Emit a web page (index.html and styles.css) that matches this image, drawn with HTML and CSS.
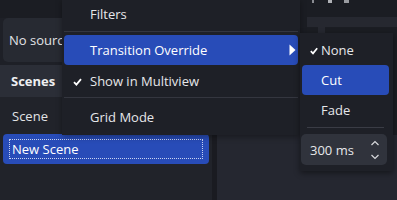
FILE: index.html
```html
<!DOCTYPE html>
<html>
<head>
<meta charset="utf-8">
<link rel="stylesheet" href="styles.css">
</head>
<body>
<div class="app">
  <div class="left">
    <div class="top-gap"></div>
    <div class="nosource">No source</div>
    <div class="dock-title">Scenes</div>
    <div class="scene-list">
      <div class="scene-row">Scene</div>
      <div class="scene-row selected"><span class="focus">New Scene</span></div>
    </div>
  </div>
  <div class="divider"></div>
  <div class="right">
    <div class="right-top">
      <div class="icons"><span class="ic a"></span><span class="ic b"></span><span class="ic c"></span></div>
      <div class="strip"></div>
      <div class="notch"></div>
    </div>
    <div class="panel"></div>
  </div>

  <div class="menu">
    <div class="item first">Filters</div>
    <div class="sep s1"></div>
    <div class="item active">Transition Override
      <svg class="arrow" width="7" height="12" viewBox="0 0 7 12"><path d="M0.5 0.5 L6.5 6 L0.5 11.5 Z" fill="#ffffff"/></svg>
    </div>
    <div class="item checked">
      <svg class="check" width="9" height="8" viewBox="0 0 9 8"><path d="M1 4.2 L3.4 6.6 L8 1.2" fill="none" stroke="#ffffff" stroke-width="1.8"/></svg>
      Show in Multiview</div>
    <div class="sep s2"></div>
    <div class="item">Grid Mode</div>
  </div>

  <div class="submenu">
    <div class="sitem">
      <svg class="check small" width="8" height="8" viewBox="0 0 8 8"><path d="M0.8 4.2 L3 6.4 L7.2 1.3" fill="none" stroke="#ffffff" stroke-width="1.7"/></svg>
      None</div>
    <div class="sitem active">Cut</div>
    <div class="sitem">Fade</div>
    <div class="ssep"></div>
    <div class="spin">
      <span>300 ms</span>
      <svg class="chev" width="10" height="22" viewBox="0 0 10 22">
        <path d="M1.5 6 L5 2.5 L8.5 6" fill="none" stroke="#d8d9dc" stroke-width="1.2"/>
        <path d="M1.5 16 L5 19.5 L8.5 16" fill="none" stroke="#d8d9dc" stroke-width="1.2"/>
      </svg>
    </div>
  </div>
</div>
</body>
</html>
```
FILE: styles.css
```css
html, body {
  margin: 0;
  padding: 0;
  background: #1c1e25;
}
body {
  font-family: "Open Sans", "Noto Sans", sans-serif;
  font-size: 13px;
  color: #e4e5e8;
  width: 397px;
  height: 200px;
  overflow: hidden;
}
.app {
  position: relative;
  display: flex;
  width: 397px;
  height: 200px;
}
.left {
  width: 212px;
  display: flex;
  flex-direction: column;
  background: #1e2027;
}
.top-gap {
  height: 18px;
  background: #1b1d23;
}
.nosource {
  height: 44px;
  margin: 0 3px 3px 3px;
  background: #272a32;
  border-radius: 5px;
  display: flex;
  align-items: center;
  padding-left: 6px;
  color: #e2e3e6;
}
.dock-title {
  height: 32px;
  background: #2b2e37;
  display: flex;
  align-items: center;
  padding-left: 11px;
  font-weight: 700;
  color: #eeeff1;
}
.scene-list {
  flex: 1;
  display: flex;
  flex-direction: column;
  padding: 4px 3px 0 3px;
  gap: 3px;
  background: #21232a;
}
.scene-row {
  height: 30px;
  display: flex;
  align-items: center;
  padding-left: 9px;
  color: #e2e3e6;
  border-radius: 4px;
}
.scene-row.selected {
  background: #284cb8;
  padding-left: 6px;
  color: #ffffff;
}
.focus {
  display: flex;
  align-items: center;
  flex: 1;
  height: 18px;
  margin-right: 6px;
  padding-left: 2px;
  border: 1px dotted #c9d3f2;
}
.divider {
  width: 5px;
  background: #1a1b21;
}
.right {
  flex: 1;
  display: flex;
  flex-direction: column;
}
.right-top {
  height: 135px;
  position: relative;
  background: #1b1d23;
}
.icons {
  display: flex;
  gap: 10px;
  padding-left: 95px;
}
.ic {
  display: block;
  height: 3px;
  background: #8a8c92;
}
.ic.a { width: 2px; }
.ic.b { width: 4px; background: #b0b2b6; margin-left: 4px; }
.ic.c { width: 5px; background: #9a9ca1; margin-left: 2px; }
.strip {
  position: absolute;
  left: 90px;
  right: 0;
  top: 17px;
  height: 10px;
  background: #262830;
}
.notch {
  position: absolute;
  left: 101px;
  top: 26px;
  width: 7px;
  height: 8px;
  background: #262830;
}
.panel {
  flex: 1;
  background: #252730;
}
.menu {
  position: absolute;
  left: 62px;
  top: -1px;
  width: 238px;
  height: 136px;
  background: #1e2027;
  box-shadow: 0 2px 6px rgba(0,0,0,0.35);
  display: flex;
  flex-direction: column;
}
.item {
  position: relative;
  height: 30px;
  margin: 0 2px;
  padding-left: 26px;
  display: flex;
  align-items: center;
  border-radius: 4px;
  color: #e6e7ea;
}
.item.active {
  background: #284cb8;
  color: #ffffff;
  margin-bottom: 1px;
}
.arrow {
  position: absolute;
  right: 2px;
  top: 9px;
}
.check {
  position: absolute;
  left: 9px;
  top: 12px;
}
.sep {
  height: 1px;
  background: #34363f;
  margin: 2px 2px 3px 2px;
}
.sep.s2 {
  margin: 1px 2px 4px 2px;
}
.submenu {
  position: absolute;
  left: 300px;
  top: 33px;
  width: 93px;
  height: 138px;
  background: #1e2027;
  box-shadow: 0 2px 6px rgba(0,0,0,0.45);
  display: flex;
  flex-direction: column;
  padding-top: 2px;
  box-sizing: border-box;
}
.sitem {
  position: relative;
  height: 30px;
  margin: 0 4px 0 2px;
  padding-left: 19px;
  display: flex;
  align-items: center;
  border-radius: 4px;
  color: #e6e7ea;
}
.sitem .check.small {
  left: 8px;
  top: 12px;
}
.sitem.active {
  background: #284cb8;
  color: #ffffff;
}
.ssep {
  height: 1px;
  background: #3a3c45;
  margin: 2px 9px 6px 7px;
}
.spin {
  height: 31px;
  margin: 0 6px 0 1px;
  background: #30333c;
  border-radius: 5px;
  display: flex;
  align-items: center;
  justify-content: space-between;
  padding: 0 7px 0 9px;
  color: #e6e7ea;
}
.chev {
  display: block;
}
```
